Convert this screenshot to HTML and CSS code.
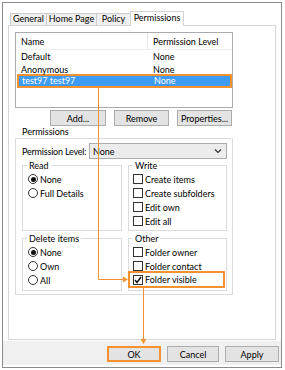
FILE: index.html
```html
<html>
    <head>
        <link rel="stylesheet" href="styles.css">
    </head>
    <body>
        <div class="frame">
            <!--tab strip-->
            <div class="tabs">
                <div class="tab tab-general">General</div>
                <div class="tab tab-home">Home Page</div>
                <div class="tab tab-policy">Policy</div>
                <div class="tab tab-perm selected">Permissions</div>
            </div>

            <div class="panel">
                <!--user list-->
                <div class="list">
                    <div class="list-row list-head">
                        <span class="col-name">Name</span>
                        <span class="col-level">Permission Level</span>
                    </div>
                    <div class="list-row"><span class="col-name">Default</span><span class="col-level">None</span></div>
                    <div class="list-row"><span class="col-name">Anonymous</span><span class="col-level">None</span></div>
                    <div class="list-row picked"><span class="col-name">test97 test97</span><span class="col-level">None</span></div>
                </div>

                <div class="list-buttons">
                    <button type="button" class="btn btn-add">Add...</button>
                    <button type="button" class="btn btn-remove">Remove</button>
                    <button type="button" class="btn btn-props">Properties...</button>
                </div>

                <!--permissions box-->
                <div class="perm-title">Permissions</div>
                <div class="perm-box">
                    <div class="level-row">
                        <span class="level-label">Permission Level:</span>
                        <div class="select">
                            <span>None</span>
                            <svg width="8" height="6" viewBox="0 0 8 6"><polyline points="1,1.5 4,4.5 7,1.5" fill="none" stroke="#333" stroke-width="1.2"/></svg>
                        </div>
                    </div>

                    <div class="groups">
                        <div class="group group-tall">
                            <div class="group-title">Read</div>
                            <div class="items">
                                <div class="item"><span class="radio on"></span>None</div>
                                <div class="item"><span class="radio"></span>Full Details</div>
                            </div>
                        </div>
                        <div class="group group-tall">
                            <div class="group-title">Write</div>
                            <div class="items items-check">
                                <div class="item"><span class="check"></span>Create items</div>
                                <div class="item"><span class="check"></span>Create subfolders</div>
                                <div class="item"><span class="check"></span>Edit own</div>
                                <div class="item"><span class="check"></span>Edit all</div>
                            </div>
                        </div>
                        <div class="group group-short">
                            <div class="group-title">Delete items</div>
                            <div class="items">
                                <div class="item"><span class="radio on"></span>None</div>
                                <div class="item"><span class="radio"></span>Own</div>
                                <div class="item"><span class="radio"></span>All</div>
                            </div>
                        </div>
                        <div class="group group-short">
                            <div class="group-title">Other</div>
                            <div class="items items-check">
                                <div class="item"><span class="check"></span>Folder owner</div>
                                <div class="item"><span class="check"></span>Folder contact</div>
                                <div class="item marked">
                                    <span class="check">
                                        <svg width="8" height="8" viewBox="0 0 8 8"><polyline points="1,4 3,6.5 7,1" fill="none" stroke="#111" stroke-width="1.5"/></svg>
                                    </span>Folder visible
                                </div>
                            </div>
                        </div>
                    </div>
                </div>
            </div>

            <!--dialog buttons-->
            <div class="footer">
                <button type="button" class="btn btn-ok">OK</button>
                <button type="button" class="btn btn-cancel">Cancel</button>
                <button type="button" class="btn btn-apply">Apply</button>
            </div>
        </div>

        <!--orange callout arrows drawn over the dialog-->
        <svg class="arrows" width="285" height="370" viewBox="0 0 285 370">
            <polyline points="98.5,88 98.5,279.5 124,279.5" fill="none" stroke="#f5922f" stroke-width="1"/>
            <polygon points="123,276.5 128,279.5 123,282.5" fill="#f5922f"/>
            <line x1="143.5" y1="288" x2="143.5" y2="340" stroke="#f5922f" stroke-width="1"/>
            <polygon points="140.5,339 146.5,339 143.5,344" fill="#f5922f"/>
        </svg>
    </body>
</html>
```

FILE: styles.css
```css
body{
    margin: 0;
    background: #ffffff;
    font-family: Lato, "Open Sans", sans-serif;
    font-size: 9px;
    color: #000000;
    white-space: nowrap;}

.frame{
    box-sizing: border-box;
    width: 280px;
    height: 366px;
    margin: 2px 0 0 2px;
    padding: 8px 0 0 5px;
    border: 1px solid #8c8c8c;
    background: #ffffff;}

/*tab strip above the panel*/
.tabs{
    display: flex;
    align-items: flex-end;
    height: 14px;
    padding-left: 2px;}

.tab{
    box-sizing: border-box;
    height: 12px;
    line-height: 10px;
    text-align: center;
    border: 1px solid #cccccc;
    border-bottom: none;
    background: #f0f0f0;
    margin-left: -1px;}

.tab-general{ width: 37px; margin-left: 0;}
.tab-home{ width: 51px;}
.tab-policy{ width: 35px;}
.tab-perm{ width: 54px;}

.tab.selected{
    position: relative;
    z-index: 1;
    height: 15px;
    margin-bottom: -1px;
    line-height: 12px;
    background: #ffffff;
    border-color: #d4d4d4;}

.panel{
    box-sizing: border-box;
    width: 268px;
    height: 315px;
    padding: 6px;
    border: 1px solid #d6d6d6;
    background: #ffffff;}

/*list of users*/
.list{
    box-sizing: border-box;
    width: 218px;
    height: 76px;
    border: 1px solid #a9abb0;}

.list-row{
    display: flex;
    height: 13px;
    line-height: 13px;}

.list-head{
    height: 17px;
    line-height: 17px;
    border-bottom: 1px solid #f0f0f0;
    box-sizing: border-box;}

.col-name{
    width: 132px;
    padding-left: 5px;
    box-sizing: border-box;}

.col-level{
    padding-left: 5px;}

.list-head .col-name{
    border-right: 1px solid #e5e5e5;}

.list-row.picked{
    box-sizing: border-box;
    height: 14px;
    line-height: 10px;
    margin: -2px 0 0 1px;
    border: 2px solid #f5922f;
    background: #3d9bf2;
    color: #ffffff;}

.list-row.picked .col-name{
    width: 130px;
    padding-left: 3px;}

.list-buttons{
    display: flex;
    justify-content: flex-end;
    gap: 8px;
    width: 217px;
    margin-top: 2px;}

button.btn{
    box-sizing: border-box;
    height: 16px;
    padding: 0;
    font-family: Lato, "Open Sans", sans-serif;
    font-size: 9px;
    color: #000000;
    background: #e3e3e3;
    border: 1px solid #adadad;}

.btn-add{ width: 56px;}
.btn-remove{ width: 55px;}
.btn-props{ width: 55px;}

/*permissions group*/
.perm-title{
    height: 12px;
    line-height: 12px;
    padding-left: 7px;}

.perm-box{
    box-sizing: border-box;
    width: 218px;
    height: 157px;
    padding: 0 5px 0 6px;
    border: 1px solid #dcdcdc;}

.level-row{
    display: flex;
    align-items: center;
    justify-content: space-between;
    margin-top: 4px;}

.level-label{
    letter-spacing: -0.2px;}

.select{
    box-sizing: border-box;
    display: flex;
    align-items: center;
    justify-content: space-between;
    width: 138px;
    height: 16px;
    padding: 0 4px 0 3px;
    border: 1px solid #acacac;
    background: #ececec;}

.groups{
    display: grid;
    grid-template-columns: 100px 99px;
    column-gap: 6px;
    row-gap: 7px;
    margin-top: 6px;}

.group{
    box-sizing: border-box;
    border: 1px solid #dcdcdc;}

.group-tall{ height: 66px;}
.group-short{ height: 53px;}

.group-title{
    width: fit-content;
    height: 11px;
    line-height: 11px;
    margin: -6px 0 0 4px;
    padding: 0 2px;
    background: #ffffff;}

.items{
    padding: 1px 0 0 5px;}

.items-check{
    padding-left: 4px;}

.item{
    display: flex;
    align-items: center;
    height: 14px;}

.radio{
    box-sizing: border-box;
    display: flex;
    align-items: center;
    justify-content: center;
    width: 10px;
    height: 10px;
    margin-right: 2px;
    border: 1px solid #333333;
    border-radius: 50%;
    background: #ffffff;}

.radio.on::after{
    content: "";
    width: 5px;
    height: 5px;
    border-radius: 50%;
    background: #111111;}

.check{
    box-sizing: border-box;
    display: flex;
    align-items: center;
    justify-content: center;
    width: 10px;
    height: 10px;
    margin-right: 2px;
    border: 1px solid #333333;
    background: #ffffff;}

/*orange highlight round the ticked box*/
.item.marked{
    box-sizing: border-box;
    height: 17px;
    width: 97px;
    margin: -2px 0 0 -5px;
    padding-left: 3px;
    border: 2px solid #f5922f;}

/*bottom row of the dialog*/
.footer{
    display: flex;
    gap: 6px;
    height: 24px;
    margin: 1px 0 0 -5px;
    padding: 5px 0 0 104px;
    background: #f0f0f0;
    box-sizing: border-box;}

.btn-ok{
    width: 54px;
    border: 2px solid #f5922f !important;}

.btn-cancel{ width: 52px;}
.btn-apply{ width: 54px;}

.arrows{
    position: absolute;
    top: 0;
    left: 0;
    pointer-events: none;}
```
